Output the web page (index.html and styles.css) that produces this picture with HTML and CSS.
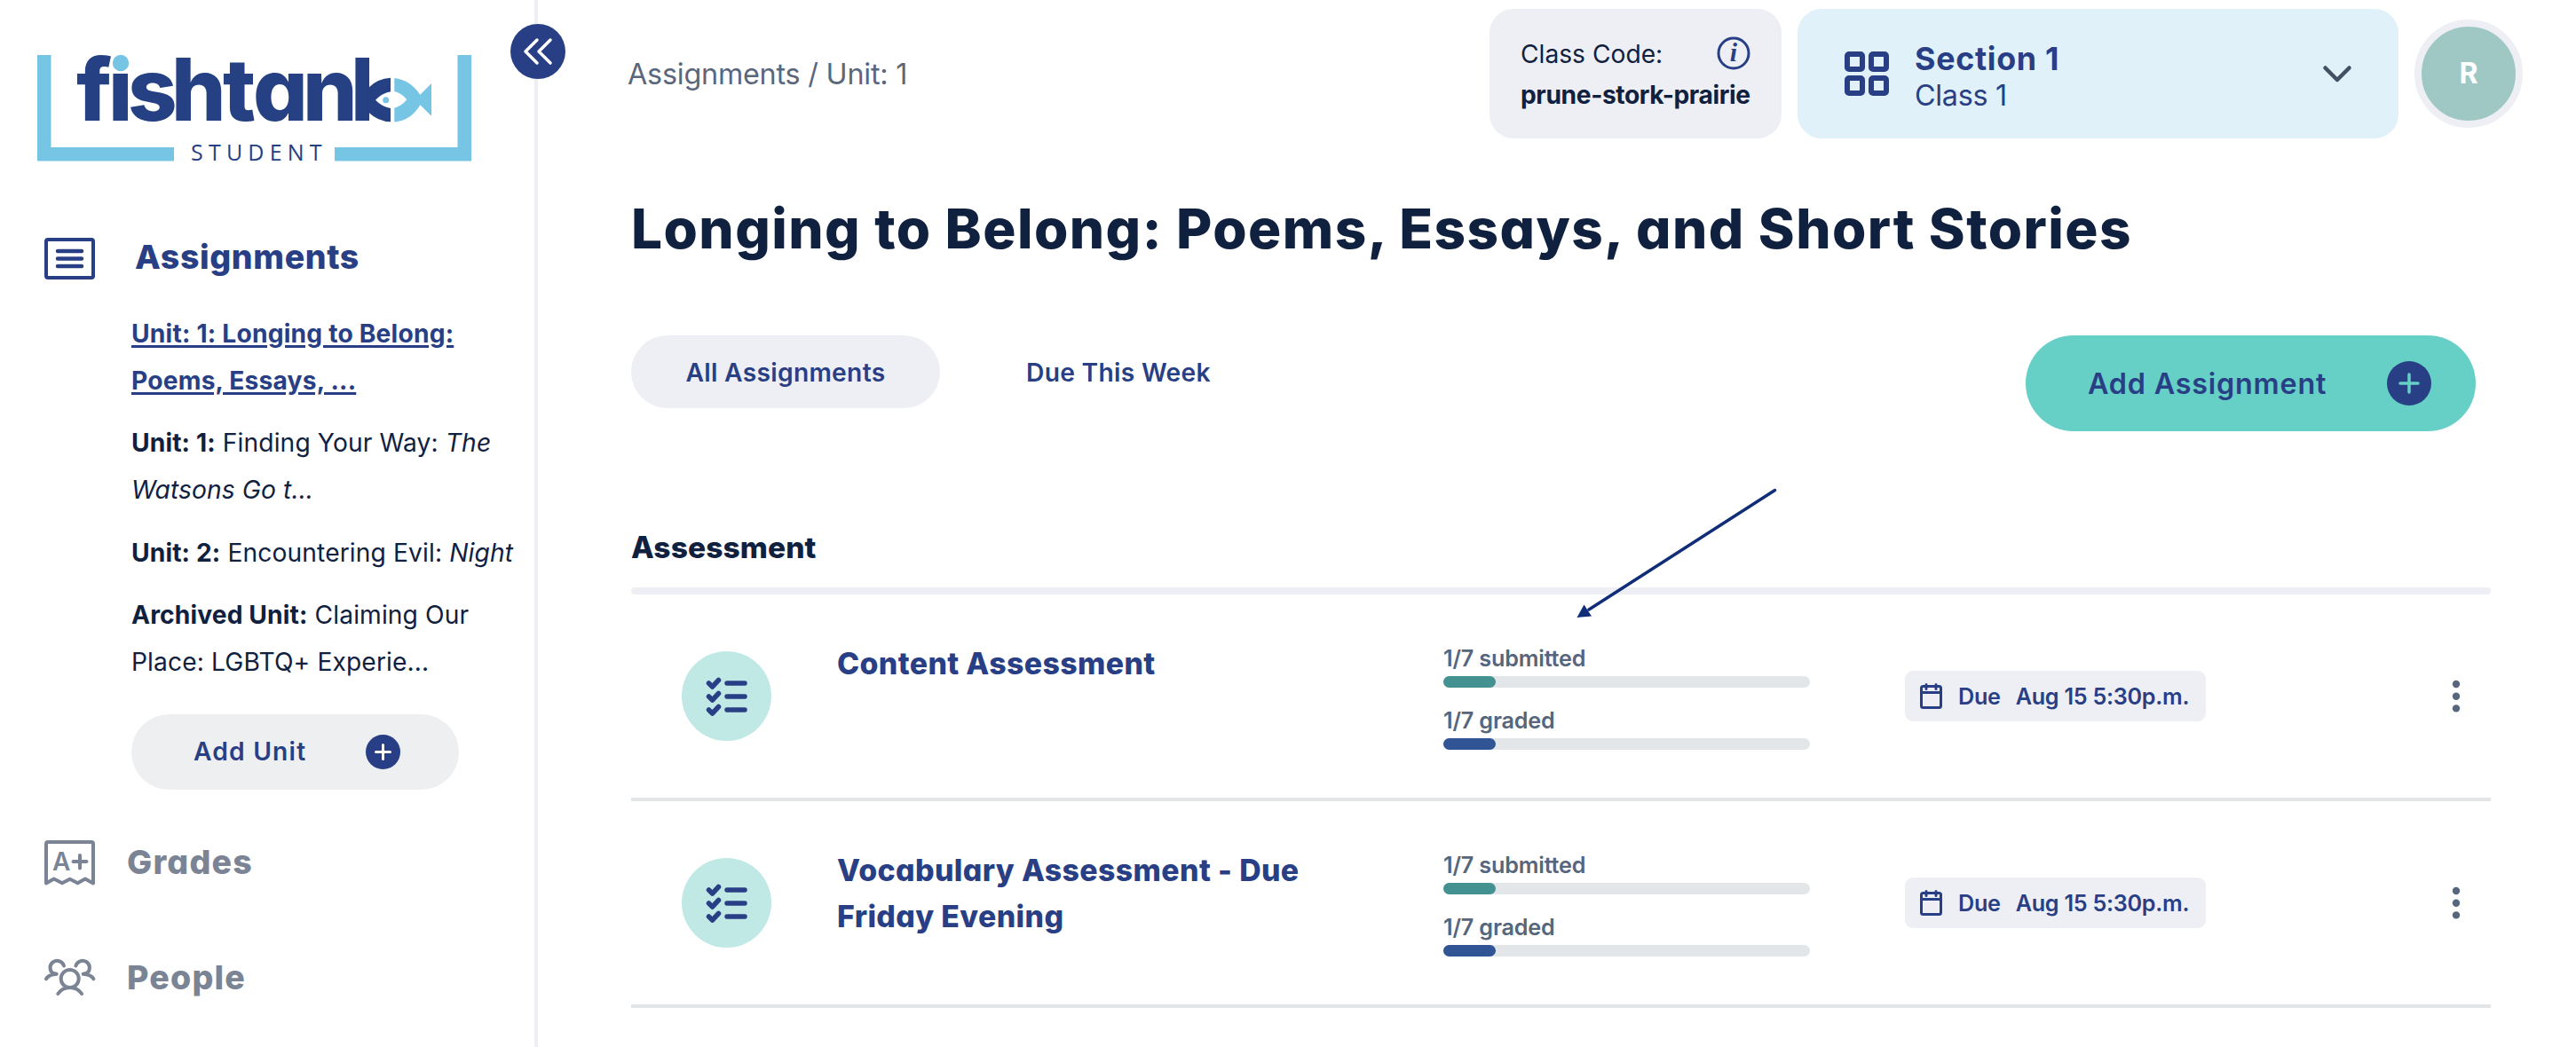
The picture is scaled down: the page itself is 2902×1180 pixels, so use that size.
FILE: index.html
```html
<!doctype html>
<html lang="en">
<head>
	<meta charset="UTF-8">
	<title>Fishtank Student</title>
	<link rel="stylesheet" href="styles.css">
</head>
<body>
	<div class="app">
		<aside class="sidebar">
			<button class="collapse">
				<svg width="62" height="62" viewBox="0 0 62 62"><path d="M30 18L17 31l13 13M45 18L32 31l13 13"/></svg>
			</button>
			<svg class="logo" width="489" height="122" viewBox="0 0 489 122">
				<path class="tank" d="M0 0h15.500v104H154v15.500H0zM473.500 0H489v119.500H335V104h138.500z"/>
				<text class="logo-name" y="74" x="44 80 102 151 209 243 299 353">fishtank</text>
				<rect class="logo-gap" x="374" y="0" width="60" height="80"/>
				<rect class="logo-gap" x="84.500" y="-6" width="22" height="26"/>
				<circle class="tank" cx="94" cy="9" r="9.200"/>
				<path class="logo-dark" d="M373 37Q383 26.500 398 25.700v15.600q-10 2-17 9.400 7 7.500 17 9.300v15.300Q384 75 373 64.500z"/>
				<path class="tank" d="M402.300 26Q420 28 431.300 44.700L444 32v36.700L431.300 56.300Q421 74 402.300 75.500V59.700q8-2 14-9.400-6-7.500-14-9.300z"/>
				<circle class="tank" cx="392.700" cy="50.700" r="3.500"/>
				<text class="logo-sub" x="173" y="119">STUDENT</text>
			</svg>
			<nav>
				<a class="nav-item active">
					<svg width="58" height="48" viewBox="0 0 58 48"><rect x="2" y="2" width="53" height="43" rx="2"/><path class="thick" d="M15 15h27M15 23.500h27M15 32h27"/></svg>
					<span>Assignments</span>
				</a>
				<ul class="units">
					<li class="current"><b>Unit: 1: Longing to Belong: Poems, Essays, ...</b></li>
					<li><b>Unit: 1:</b> Finding Your Way: <i>The Watsons Go t...</i></li>
					<li><b>Unit: 2:</b> Encountering Evil: <i>Night</i></li>
					<li><b>Archived Unit:</b> Claiming Our Place: LGBTQ+ Experie...</li>
				</ul>
				<button class="add-unit">
					<span>Add Unit</span>
					<svg width="39" height="39" viewBox="0 0 39 39"><circle cx="19.500" cy="19.500" r="19.500"/><path d="M11.500 19.500h16M19.500 11.500v16"/></svg>
				</button>
				<a class="nav-item grades">
					<svg width="58" height="50" viewBox="0 0 58 50"><path d="M2 48.500V4q0-2 2-2h49q2 0 2 2v44.500l-9-5-8.500 4.800-8.800-4.600-8.700 4.600-9.300-4.800z"/><text class="mark" x="9" y="34">A</text><path d="M32.500 24h15M40 17v14.500"/></svg>
					<span>Grades</span>
				</a>
				<a class="nav-item people">
					<svg width="58" height="42" viewBox="0 0 58 42"><circle cx="28.700" cy="22" r="10"/><path d="M15.300 39Q20 32 28.700 32T42.100 39M22 7.500A7.900 7.900 0 1 0 9.300 15.700L13.700 16.700Q5 17 2 22.300M35.400 7.500A7.900 7.900 0 1 1 48.100 15.700L43.700 16.700Q52.400 17 55.400 22.300"/></svg>
					<span>People</span>
				</a>
			</nav>
		</aside>

		<main class="main">
			<header class="topbar">
				<div class="breadcrumb">Assignments / Unit: 1</div>
				<div class="class-code">
					<div class="code-label">
						<span>Class Code:</span>
						<svg width="38" height="38" viewBox="0 0 38 38"><circle cx="19" cy="19" r="17"/><text x="19" y="28" text-anchor="middle">i</text></svg>
					</div>
					<div class="code">prune-stork-prairie</div>
				</div>
				<div class="section-picker">
					<svg class="grid-icon" width="50" height="50" viewBox="0 0 50 50"><rect x="3" y="3" width="17" height="17" rx="2"/><rect x="30" y="3" width="17" height="17" rx="2"/><rect x="3" y="30" width="17" height="17" rx="2"/><rect x="30" y="30" width="17" height="17" rx="2"/></svg>
					<div class="section-text">
						<strong>Section 1</strong>
						<span>Class 1</span>
					</div>
					<svg class="chevron" width="32" height="19" viewBox="0 0 32 19"><path d="M2.500 2.500L16 16 29.500 2.500"/></svg>
				</div>
				<div class="avatar">R</div>
			</header>

			<div class="content">
				<h1>Longing to Belong: Poems, Essays, and Short Stories</h1>
				<div class="toolbar">
					<button class="tab tab-active">All Assignments</button>
					<button class="tab">Due This Week</button>
					<button class="add-assignment">
						<span>Add Assignment</span>
						<svg width="50" height="50" viewBox="0 0 50 50"><circle cx="25" cy="25" r="25"/><path d="M15 25h20M25 15v20"/></svg>
					</button>
				</div>

				<section class="group">
					<h2>Assessment</h2>
					<div class="rule"></div>
					<svg class="pointer" width="240" height="160" viewBox="0 0 240 160"><path class="line" d="M228.500 8.500L19 143"/><path class="head" d="M5.500 152L13.500 137.500 22 150.500z"/></svg>
					<div class="row">
						<div class="type">
							<svg width="48" height="46" viewBox="0 0 48 46"><path d="M3.500 8l4 4 7-7.500M3.500 23l4 4 7-7.500M3.500 38l4 4 7-7.500M24 8h20M24 23h20M24 38h20"/></svg>
						</div>
						<h3>Content Assessment</h3>
						<div class="progress">
							<p>1/7 submitted</p>
							<div class="bar"><div class="fill submitted" style="width:14.286%"></div></div>
							<p>1/7 graded</p>
							<div class="bar"><div class="fill graded" style="width:14.286%"></div></div>
						</div>
						<div class="due">
							<svg width="26" height="30" viewBox="0 0 26 30"><rect x="1.500" y="3.500" width="22" height="24" rx="2"/><path d="M2 10.500h21M7 1.500v5M18 1.500v5"/></svg>
							<span>Due</span><span>Aug 15 5:30p.m.</span>
						</div>
						<svg class="menu" width="10" height="38" viewBox="0 0 10 38"><circle cx="5" cy="5" r="4.200"/><circle cx="5" cy="18.700" r="4.200"/><circle cx="5" cy="32.400" r="4.200"/></svg>
					</div>
					<div class="row">
						<div class="type">
							<svg width="48" height="46" viewBox="0 0 48 46"><path d="M3.500 8l4 4 7-7.500M3.500 23l4 4 7-7.500M3.500 38l4 4 7-7.500M24 8h20M24 23h20M24 38h20"/></svg>
						</div>
						<h3>Vocabulary Assessment - Due Friday Evening</h3>
						<div class="progress">
							<p>1/7 submitted</p>
							<div class="bar"><div class="fill submitted" style="width:14.286%"></div></div>
							<p>1/7 graded</p>
							<div class="bar"><div class="fill graded" style="width:14.286%"></div></div>
						</div>
						<div class="due">
							<svg width="26" height="30" viewBox="0 0 26 30"><rect x="1.500" y="3.500" width="22" height="24" rx="2"/><path d="M2 10.500h21M7 1.500v5M18 1.500v5"/></svg>
							<span>Due</span><span>Aug 15 5:30p.m.</span>
						</div>
						<svg class="menu" width="10" height="38" viewBox="0 0 10 38"><circle cx="5" cy="5" r="4.200"/><circle cx="5" cy="18.700" r="4.200"/><circle cx="5" cy="32.400" r="4.200"/></svg>
					</div>
				</section>
			</div>
		</main>
	</div>
</body>
</html>
```
FILE: styles.css
```css
*{
	margin: 0;
	padding: 0;
	box-sizing: border-box;
}
body{
	font-family: Inter, "Liberation Sans", sans-serif;
	background: #fff;
	color: #10213f;
}
button{
	border: 0;
	font-family: inherit;
	cursor: pointer;
}
svg{
	display: block;
	flex: none;
	fill: none;
	overflow: visible;
	stroke-linecap: round;
	stroke-linejoin: round;
}
/* single-storey a */
h1, h2, h3, .nav-item, .logo-name{
	font-weight: 800;
	font-feature-settings: "cv11";
}
.app{
	display: flex;
	height: 1180px;
	overflow: hidden;
}

/* sidebar */
.sidebar{
	position: relative;
	flex: none;
	width: 606px;
	padding-top: 62px;
	border-right: 4px solid #eeeff5;
}
.collapse{
	position: absolute;
	top: 27px;
	right: -35px;
	width: 62px;
	height: 62px;
	border-radius: 50%;
	background: #293f85;
}
.collapse svg{
	stroke: #fff;
	stroke-width: 3.5;
}
.logo{
	margin-left: 42px;
}
.tank{
	fill: #76c5e4;
}
.logo-name{
	font-size: 97px;
	fill: #254184;
}
.logo-gap{
	fill: #fff;
}
.logo-dark{
	fill: #254184;
}
.logo-sub{
	font-family: "Open Sans", sans-serif;
	font-size: 25px;
	letter-spacing: 6.2px;
	fill: #254184;
}
.nav-item{
	display: flex;
	align-items: center;
	gap: 35px;
	height: 50px;
	padding-left: 50px;
	color: #7b8494;
	font-size: 37.500px;
	letter-spacing: 1.200px;
}
.nav-item svg{
	stroke: #7b8494;
	stroke-width: 4;
}
.nav-item .mark{
	font-size: 28px;
	font-weight: 600;
	letter-spacing: 0;
	stroke: none;
	fill: #7b8494;
}
.nav-item.active{
	gap: 44px;
	height: 48px;
	margin-top: 84px;
	color: #293f85;
	letter-spacing: .600px;
}
.nav-item.active span{
	margin-top: -5px;
}
.nav-item.active svg{
	stroke: #293f85;
}
.nav-item .thick{
	stroke-width: 4.500;
}
.nav-item.grades{
	margin-top: 57px;
}
.nav-item.people{
	margin-top: 80px;
}
.units{
	width: 602px;
	padding: 33.500px 18px 0 148px;
	list-style: none;
	font-size: 28.200px;
	line-height: 53px;
	letter-spacing: .12px;
}
.units li{
	margin-bottom: 17.500px;
}
.current{
	width: 400px;
	color: #293f85;
	letter-spacing: .2px;
	text-decoration: underline;
	text-decoration-thickness: 3px;
	text-underline-offset: 3px;
}
.add-unit{
	display: flex;
	align-items: center;
	justify-content: space-between;
	width: 369px;
	height: 85px;
	margin: 31.500px 0 0 148px;
	padding: 0 66px 0 70px;
	border-radius: 43px;
	background: #eeeff1;
	color: #293f85;
	font-size: 28.200px;
	font-weight: 600;
	letter-spacing: 1.200px;
}
.add-unit circle, .add-assignment circle{
	fill: #293f85;
}
.add-unit path{
	stroke: #fff;
	stroke-width: 3;
}

/* top bar */
.main{
	flex: 1;
	padding-top: 10px;
}
.topbar{
	display: flex;
	align-items: center;
	gap: 18px;
	height: 146px;
	padding: 0 60px 0 101px;
}
.breadcrumb{
	margin-right: auto;
	color: #5a667c;
	font-size: 32.300px;
	letter-spacing: -.2px;
}
.class-code{
	width: 329px;
	height: 146px;
	padding: 31px 35px 0 35px;
	border-radius: 27px;
	background: #eeeff5;
	font-size: 28.200px;
	line-height: 40px;
}
.code-label{
	display: flex;
	justify-content: space-between;
}
.code-label svg{
	stroke: #293f85;
	stroke-width: 3;
}
.code-label text{
	font: italic bold 30px "Liberation Serif", serif;
	stroke: none;
	fill: #293f85;
}
.code{
	margin-top: 6px;
	font-weight: 700;
	letter-spacing: -.4px;
	white-space: nowrap;
}
.section-picker{
	display: flex;
	align-items: center;
	width: 677px;
	height: 146px;
	padding: 0 53px;
	border-radius: 27px;
	background: #e0f1f9;
	color: #293f85;
}
.grid-icon{
	stroke: #293f85;
	stroke-width: 6;
}
.section-text{
	display: flex;
	flex-direction: column;
	gap: 2px;
	margin: 0 auto 0 29px;
	padding-top: 7px;
	font-size: 32.300px;
	line-height: 40px;
	letter-spacing: -.3px;
}
.section-text strong{
	font-size: 35.800px;
	letter-spacing: .7px;
}
.chevron{
	stroke: #454f63;
	stroke-width: 4.500;
}
.avatar{
	width: 122px;
	height: 122px;
	border: 8px solid #eeeff5;
	border-radius: 50%;
	background: #9fc8c5;
	color: #fff;
	font-size: 32px;
	font-weight: 700;
	line-height: 105px;
	text-align: center;
}

/* content */
.content{
	padding: 67px 96px 0 105px;
}
h1{
	font-size: 62px;
	line-height: 70px;
	letter-spacing: 1.450px;
	white-space: nowrap;
}
.toolbar{
	display: flex;
	align-items: flex-start;
	margin-top: 85px;
}
.tab{
	height: 82px;
	padding: 2px 60px 0;
	border-radius: 41px;
	background: none;
	color: #293f85;
	font-size: 28.200px;
	font-weight: 600;
	letter-spacing: .3px;
}
.tab-active{
	width: 348px;
	margin-right: 37px;
	background: #eeeff5;
}
.add-assignment{
	display: flex;
	align-items: center;
	justify-content: space-between;
	width: 507px;
	height: 108px;
	margin: 0 17px 0 auto;
	padding: 0 50px 0 70px;
	border-radius: 54px;
	background: #66cfc6;
	color: #293f85;
	font-size: 32.300px;
	font-weight: 600;
	letter-spacing: .8px;
}
.add-assignment path{
	stroke: #66cfc6;
	stroke-width: 3.500;
}
.group{
	position: relative;
	margin-top: 111px;
}
h2{
	font-size: 33.500px;
	line-height: 40px;
	letter-spacing: .1px;
}
.rule{
	height: 8px;
	margin-top: 25px;
	border-radius: 4px;
	background: #eeeff5;
}
/* callout arrow lies over the list */
.pointer{
	position: absolute;
	top: -53px;
	left: 1060px;
}
.pointer .line{
	stroke: #102d78;
	stroke-width: 3.500;
}
.pointer .head{
	fill: #102d78;
}
.row{
	display: grid;
	grid-template-columns: 174px 684px 520px 1fr auto;
	align-items: center;
	height: 233px;
	padding: 0 34px 0 57px;
	border-bottom: 4px solid #e2e6e9;
}
.type{
	display: flex;
	align-items: center;
	justify-content: center;
	width: 101px;
	height: 101px;
	border-radius: 50%;
	background: #c0e9e6;
}
.type svg{
	stroke: #293f85;
	stroke-width: 5.500;
}
h3{
	align-self: start;
	width: 560px;
	margin-top: 52px;
	padding-left: 1px;
	color: #293f85;
	font-size: 33.800px;
	line-height: 52px;
	letter-spacing: .4px;
}
.progress{
	align-self: start;
	width: 413px;
	padding-top: 57px;
	color: #56667c;
	font-size: 25.200px;
	font-weight: 600;
	line-height: 30px;
	letter-spacing: -.18px;
}
.bar{
	height: 13px;
	margin: 5px 0 22px;
	border-radius: 7px;
	background: #e2e6e9;
}
.fill{
	height: 13px;
	border-radius: 7px;
}
.submitted{
	background: #439190;
}
.graded{
	background: #315594;
}
.due{
	display: flex;
	align-items: center;
	justify-self: start;
	width: 339px;
	height: 57px;
	padding-left: 17px;
	border-radius: 9px;
	background: #eeeff5;
	color: #293f85;
	font-size: 25.200px;
	font-weight: 600;
	letter-spacing: -.28px;
	white-space: nowrap;
}
.due svg{
	stroke: #293f85;
	stroke-width: 3;
}
.due span{
	margin-left: 17px;
}
.menu{
	fill: #56667c;
}
```
